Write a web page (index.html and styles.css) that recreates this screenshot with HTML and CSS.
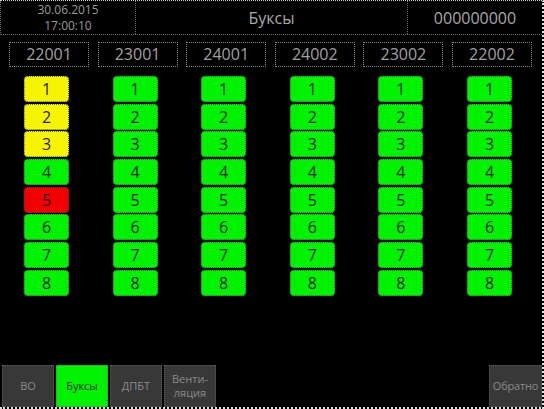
FILE: index.html
```html
<!DOCTYPE html>
<html>
<head>
<meta charset="utf-8">
<link rel="stylesheet" href="styles.css">
</head>
<body>
<div class="screen">
  <header class="header">
    <div class="cell date"><span class="line">30.06.2015</span><span class="line">17:00:10</span></div>
    <div class="cell title">Буксы</div>
    <div class="cell number">000000000</div>
  </header>
  <main class="main">
    <div class="codes">
      <div class="code">22001</div>
      <div class="code">23001</div>
      <div class="code">24001</div>
      <div class="code">24002</div>
      <div class="code">23002</div>
      <div class="code">22002</div>
    </div>
    <div class="cols">
      <div class="col">
        <div class="btn yellow">1</div><div class="btn yellow">2</div><div class="btn yellow">3</div><div class="btn">4</div>
        <div class="btn red">5</div><div class="btn">6</div><div class="btn">7</div><div class="btn">8</div>
      </div>
      <div class="col">
        <div class="btn">1</div><div class="btn">2</div><div class="btn">3</div><div class="btn">4</div>
        <div class="btn">5</div><div class="btn">6</div><div class="btn">7</div><div class="btn">8</div>
      </div>
      <div class="col">
        <div class="btn">1</div><div class="btn">2</div><div class="btn">3</div><div class="btn">4</div>
        <div class="btn">5</div><div class="btn">6</div><div class="btn">7</div><div class="btn">8</div>
      </div>
      <div class="col">
        <div class="btn">1</div><div class="btn">2</div><div class="btn">3</div><div class="btn">4</div>
        <div class="btn">5</div><div class="btn">6</div><div class="btn">7</div><div class="btn">8</div>
      </div>
      <div class="col">
        <div class="btn">1</div><div class="btn">2</div><div class="btn">3</div><div class="btn">4</div>
        <div class="btn">5</div><div class="btn">6</div><div class="btn">7</div><div class="btn">8</div>
      </div>
      <div class="col">
        <div class="btn">1</div><div class="btn">2</div><div class="btn">3</div><div class="btn">4</div>
        <div class="btn">5</div><div class="btn">6</div><div class="btn">7</div><div class="btn">8</div>
      </div>
    </div>
  </main>
  <footer class="footer">
    <div class="tab">ВО</div>
    <div class="tab active">Буксы</div>
    <div class="tab">ДПБТ</div>
    <div class="tab"><span class="line">Венти-</span><span class="line">ляция</span></div>
    <div class="spacer"></div>
    <div class="tab back">Обратно</div>
  </footer>
</div>
</body>
</html>
```

FILE: styles.css
```css
html, body {
  margin: 0;
  padding: 0;
  background: #000;
}
body {
  font-family: "Open Sans", "DejaVu Sans", sans-serif;
  color: #9a9a9a;
}
.screen {
  width: 544px;
  height: 409px;
  box-sizing: border-box;
  border-top: 1px dotted #cfcfcf;
  border-right: 2px dotted #e0e0e0;
  border-bottom: 2px dotted #e0e0e0;
  display: flex;
  flex-direction: column;
}
.header {
  height: 33px;
  display: grid;
  grid-template-columns: 135px 272px 1fr;
  border-bottom: 1px dotted #6a6a6a;
  border-left: 1px dotted #6a6a6a;
  flex: none;
}
.cell {
  display: flex;
  align-items: center;
  justify-content: center;
  text-align: center;
}
.line {
  display: block;
}
.date {
  flex-direction: column;
  font-size: 12px;
  line-height: 16px;
  padding-top: 1px;
  border-right: 1px dotted #6a6a6a;
  color: #9a9a9a;
}
.title {
  font-size: 16px;
  border-right: 1px dotted #6a6a6a;
  color: #a8a8a8;
}
.number {
  font-size: 16px;
  color: #a8a8a8;
}
.main {
  flex: 1;
  padding-top: 7px;
}
.codes {
  display: grid;
  grid-template-columns: repeat(6, 80px);
  column-gap: 8.6px;
  padding-left: 9px;
}
.code {
  height: 25px;
  box-sizing: border-box;
  border: 1px dotted #8a8a8a;
  font-size: 16px;
  line-height: 23px;
  text-align: center;
  color: #a0a0a0;
}
.cols {
  display: grid;
  grid-template-columns: repeat(6, 80px);
  column-gap: 8.6px;
  padding-left: 6.5px;
  margin-top: 9px;
}
.col {
  display: flex;
  flex-direction: column;
  align-items: center;
  gap: 1.7px;
}
.btn {
  width: 45px;
  height: 26px;
  box-sizing: border-box;
  background: #00f200;
  border: 1px dotted #2a6a2a;
  border-radius: 4px;
  color: #1e1e1e;
  font-size: 16px;
  line-height: 24px;
  text-align: center;
}
.btn.yellow {
  background: #f6f400;
  border-color: #6a6a20;
}
.btn.red {
  background: #f20000;
  border-color: #6a2020;
}
.footer {
  height: 42px;
  flex: none;
  display: flex;
  gap: 2px;
  padding-left: 2px;
}
.tab {
  width: 52px;
  box-sizing: border-box;
  background: #383838;
  border: 1px dotted #5a5a5a;
  color: #8a8a8a;
  font-size: 11px;
  line-height: 14px;
  display: flex;
  flex-direction: column;
  align-items: center;
  justify-content: center;
  text-align: center;
}
.tab.active {
  background: #00f200;
  color: #2a2a2a;
  border-color: #3a8a3a;
}
.spacer {
  flex: 1;
}
.tab.back {
  width: 53px;
  letter-spacing: -0.2px;
}
```
